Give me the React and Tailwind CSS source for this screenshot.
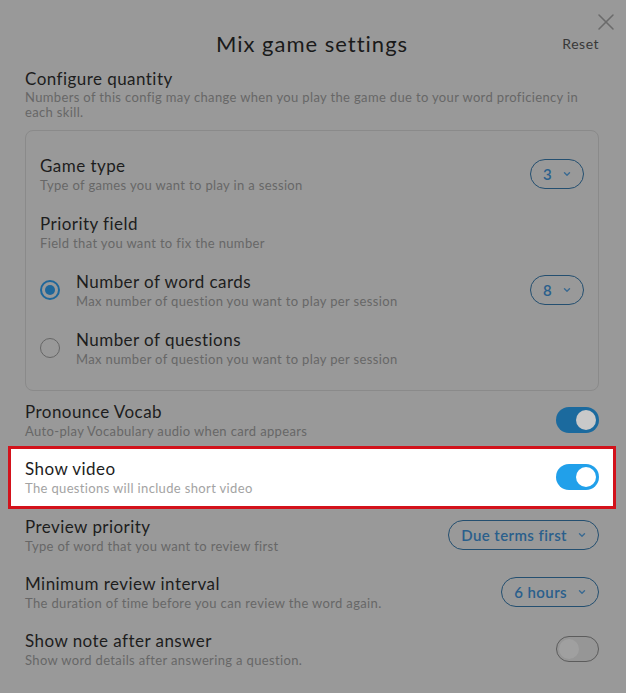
import { FiX } from 'react-icons/fi';

// small chevron used inside the pill selects
const Chevron = () => (
  <svg width="8" height="6" viewBox="0 0 8 6" fill="none" stroke="currentColor" strokeWidth="1.4" strokeLinecap="round" strokeLinejoin="round">
    <path d="M1.5 1.8 4 4.2 6.5 1.8" />
  </svg>
);

const Pill = ({ value }) => (
  <div className="flex h-[30px] shrink-0 items-center gap-[11px] rounded-full border-[1.5px] border-[#244f70] px-[12px] text-[15px] font-semibold tracking-[0.4px] text-[#2a5f8c]">
    <span>{value}</span>
    <span className="text-[#3a6a92]">
      <Chevron />
    </span>
  </div>
);

const Toggle = ({ on, track, knob }) => (
  <div
    className={
      on
        ? `flex h-[26px] w-[43px] shrink-0 items-center justify-end rounded-full px-[3px] ${track}`
        : 'flex h-[26px] w-[43px] shrink-0 items-center rounded-full border-[1.5px] border-[#5c5c5c] bg-[#969696] px-[2px]'
    }
  >
    <div className={`h-[20px] w-[20px] rounded-full ${knob}`} />
  </div>
);

const Label = ({ title, desc, descColor = 'text-[#676767]' }) => (
  <div className="min-w-0">
    <div className="text-[17px] leading-[22px] tracking-[0.45px] text-[#1d1d1d]">{title}</div>
    <div className={`text-[13px] leading-[16px] tracking-[0.35px] ${descColor}`}>{desc}</div>
  </div>
);

const Radio = ({ checked }) =>
  checked ? (
    <div className="flex h-[20px] w-[20px] shrink-0 items-center justify-center rounded-full border-2 border-[#1f679a]">
      <div className="h-[10px] w-[10px] rounded-full bg-[#1f679a]" />
    </div>
  ) : (
    <div className="h-[20px] w-[20px] shrink-0 rounded-full border-[1.5px] border-[#666666]" />
  );

export default function App() {
  return (
    <div className="relative min-h-[693px] w-full overflow-hidden bg-[#999999] pl-[25px] pr-[27px] pt-[23px] font-['Lato','Open_Sans',sans-serif]">
      {/* close button */}
      <button className="absolute right-[6px] top-[8px] text-[#6b6b6b]">
        <FiX size={28} strokeWidth={1.3} />
      </button>

      {/* header */}
      <div className="grid h-[40px] grid-cols-[1fr_auto_1fr] items-center">
        <div />
        <h1 className="text-[22px] tracking-[1px] text-[#1a1a1a]">Mix game settings</h1>
        <div className="justify-self-end text-[14px] tracking-[0.5px] text-[#383838]">Reset</div>
      </div>

      {/* configure quantity */}
      <div className="mt-[5px]">
        <div className="text-[17px] leading-[22px] tracking-[0.45px] text-[#1d1d1d]">Configure quantity</div>
        <div className="text-[13px] leading-[15px] tracking-[0.35px] text-[#676767]">
          Numbers of this config may change when you play the game due to your word proficiency in each skill.
        </div>
      </div>

      <div className="mt-[10px] flex flex-col gap-5 rounded-lg border border-[#8a8a8a] px-[14px] pb-[23px] pt-[24px]">
        <div className="flex items-center justify-between">
          <Label title="Game type" desc="Type of games you want to play in a session" />
          <Pill value="3" />
        </div>

        <Label title="Priority field" desc="Field that you want to fix the number" />

        <div className="flex items-center justify-between">
          <div className="flex items-center gap-[16px]">
            <Radio checked />
            <Label title="Number of word cards" desc="Max number of question you want to play per session" />
          </div>
          <Pill value="8" />
        </div>

        <div className="flex items-center gap-[16px]">
          <Radio />
          <Label title="Number of questions" desc="Max number of question you want to play per session" />
        </div>
      </div>

      {/* toggles and selects */}
      <div className="mt-[10px] flex flex-col gap-[19px] pb-[24px]">
        <div className="flex items-center justify-between">
          <Label title="Pronounce Vocab" desc="Auto-play Vocabulary audio when card appears" />
          <Toggle on track="bg-[#1b6a9e]" knob="bg-[#c9c9c9]" />
        </div>

        {/* highlighted row */}
        <div className="-mx-[17px] -my-[12px] flex items-center justify-between border-[3px] border-[#d3121b] bg-white px-[14px] pb-[10px] pt-[9px]">
          <Label title="Show video" desc="The questions will include short video" descColor="text-[#a3a3a3]" />
          <Toggle on track="bg-[#21a0ea]" knob="bg-white" />
        </div>

        <div className="flex items-center justify-between">
          <Label title="Preview priority" desc="Type of word that you want to review first" />
          <Pill value="Due terms first" />
        </div>

        <div className="flex items-center justify-between">
          <Label title="Minimum review interval" desc="The duration of time before you can review the word again." />
          <Pill value="6 hours" />
        </div>

        <div className="flex items-center justify-between">
          <Label title="Show note after answer" desc="Show word details after answering a question." />
          <Toggle knob="bg-[#a0a0a0]" />
        </div>
      </div>
    </div>
  );
}
